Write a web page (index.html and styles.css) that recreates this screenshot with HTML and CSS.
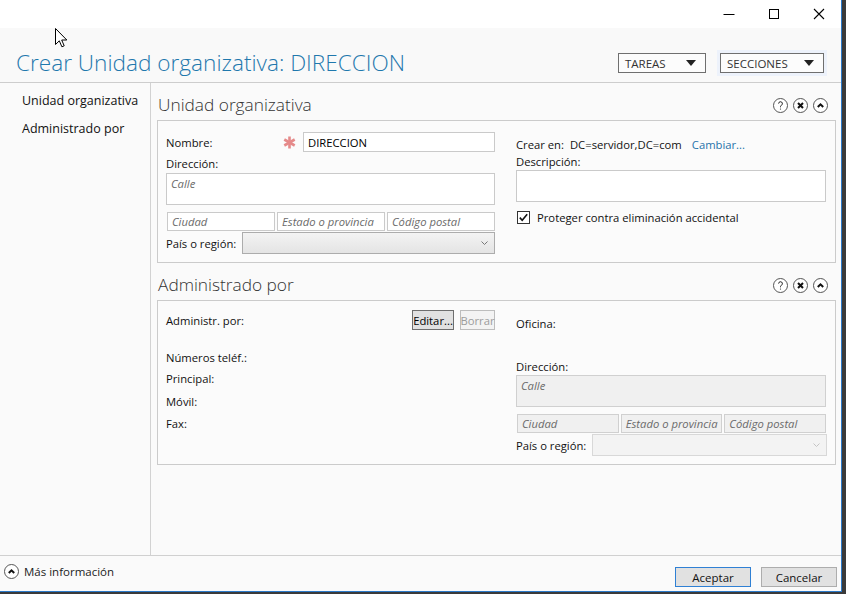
FILE: index.html
```html
<!DOCTYPE html>
<html lang="es">
<head>
<meta charset="utf-8">
<title>Crear Unidad organizativa: DIRECCION</title>
<link rel="stylesheet" href="styles.css">
</head>
<body>
<div class="window">
  <div class="titlebar">
    <span class="wbtn"><svg width="12" height="12" viewBox="0 0 12 12"><path d="M0.5 6.5h11" stroke="#000" stroke-width="1"/></svg></span>
    <span class="wbtn"><svg width="12" height="12" viewBox="0 0 12 12"><rect x="1.5" y="1.5" width="9" height="9" fill="none" stroke="#000" stroke-width="1"/></svg></span>
    <span class="wbtn"><svg width="12" height="12" viewBox="0 0 12 12"><path d="M1 1L11 11M11 1L1 11" stroke="#000" stroke-width="1.1"/></svg></span>
  </div>
  <div class="header">
    <h1 class="title">Crear Unidad organizativa: DIRECCION</h1>
    <div class="hbuttons">
      <div class="dd">TAREAS<span class="tri"></span></div>
      <div class="dd dd-wide focus">SECCIONES<span class="tri"></span></div>
    </div>
  </div>
  <div class="body">
    <nav class="nav">
      <div class="navitem">Unidad organizativa</div>
      <div class="navitem">Administrado por</div>
    </nav>
    <main class="main">
      <section class="section">
        <div class="shead">
          <h2 class="stitle">Unidad organizativa</h2>
          <div class="sicons">
            <span class="cicon"><svg width="15" height="15" viewBox="0 0 15 15"><circle cx="7.5" cy="7.5" r="7" fill="#fff" stroke="#555"/><path d="M5.6 5.6a1.9 1.9 0 1 1 2.6 1.8c-0.5 0.2-0.7 0.6-0.7 1.1v0.8" fill="none" stroke="#222" stroke-width="1"/><circle cx="7.5" cy="11" r="0.6" fill="#222"/></svg></span>
            <span class="cicon"><svg width="15" height="15" viewBox="0 0 15 15"><circle cx="7.5" cy="7.5" r="7" fill="#fff" stroke="#555"/><path d="M5 5L10 10M10 5L5 10" stroke="#111" stroke-width="2"/></svg></span>
            <span class="cicon"><svg width="15" height="15" viewBox="0 0 15 15"><circle cx="7.5" cy="7.5" r="7" fill="#fff" stroke="#555"/><path d="M4.8 9L7.5 6.3L10.2 9" fill="none" stroke="#111" stroke-width="2"/></svg></span>
          </div>
        </div>
        <div class="sbox sbox-1">
          <div class="col col-left">
            <div class="row row-name">
              <span class="lbl lbl-name">Nombre:</span>
              <span class="req"><svg width="13" height="13" viewBox="0 0 13 13"><g stroke="#e58a8a" stroke-width="2.6" stroke-linecap="butt"><path d="M6.5 0.5v12"/><path d="M1.3 3.5L11.7 9.5"/><path d="M1.3 9.5L11.7 3.5"/></g></svg></span>
              <div class="field field-name">DIRECCION</div>
            </div>
            <div class="lbl lbl-block mt4">Dirección:</div>
            <div class="field area mt1"><span class="ph">Calle</span></div>
            <div class="cityrow mt7">
              <div class="field city"><span class="ph">Ciudad</span></div>
              <div class="field city"><span class="ph">Estado o provincia</span></div>
              <div class="field city"><span class="ph">Código postal</span></div>
            </div>
            <div class="row row-country mt1">
              <span class="lbl lbl-country">País o región:</span>
              <div class="select"><svg width="7" height="4" viewBox="0 0 7 4"><path d="M0.5 0.5L3.5 3.5L6.5 0.5" fill="none" stroke="#777" stroke-width="1"/></svg></div>
            </div>
          </div>
          <div class="col col-right">
            <div class="lbl-block mt5 crear">
              <span class="lbl">Crear en:</span>
              <span class="dc">DC=servidor,DC=com</span>
              <span class="link">Cambiar...</span>
            </div>
            <div class="lbl lbl-block mt1">Descripción:</div>
            <div class="field area"></div>
            <div class="checkrow mt7">
              <span class="check"><svg width="13" height="13" viewBox="0 0 13 13"><rect x="0.5" y="0.5" width="12" height="12" fill="#fff" stroke="#333"/><path d="M2.8 6.6L5.2 9.2L10.2 3.2" fill="none" stroke="#111" stroke-width="1.6"/></svg></span>
              <span class="lbl">Proteger contra eliminación accidental</span>
            </div>
          </div>
        </div>
      </section>
      <section class="section">
        <div class="shead">
          <h2 class="stitle">Administrado por</h2>
          <div class="sicons">
            <span class="cicon"><svg width="15" height="15" viewBox="0 0 15 15"><circle cx="7.5" cy="7.5" r="7" fill="#fff" stroke="#555"/><path d="M5.6 5.6a1.9 1.9 0 1 1 2.6 1.8c-0.5 0.2-0.7 0.6-0.7 1.1v0.8" fill="none" stroke="#222" stroke-width="1"/><circle cx="7.5" cy="11" r="0.6" fill="#222"/></svg></span>
            <span class="cicon"><svg width="15" height="15" viewBox="0 0 15 15"><circle cx="7.5" cy="7.5" r="7" fill="#fff" stroke="#555"/><path d="M5 5L10 10M10 5L5 10" stroke="#111" stroke-width="2"/></svg></span>
            <span class="cicon"><svg width="15" height="15" viewBox="0 0 15 15"><circle cx="7.5" cy="7.5" r="7" fill="#fff" stroke="#555"/><path d="M4.8 9L7.5 6.3L10.2 9" fill="none" stroke="#111" stroke-width="2"/></svg></span>
          </div>
        </div>
        <div class="sbox sbox-2">
          <div class="col col-left">
            <div class="row row-admin">
              <span class="lbl">Administr. por:</span>
              <span class="btn btn-edit">Editar...</span>
              <span class="btn btn-del">Borrar</span>
            </div>
            <div class="lbl lbl-block mt20">Números teléf.:</div>
            <div class="lbl lbl-block mt5">Principal:</div>
            <div class="lbl lbl-block mt7">Móvil:</div>
            <div class="lbl lbl-block mt6">Fax:</div>
          </div>
          <div class="col col-right">
            <div class="lbl lbl-block mt6">Oficina:</div>
            <div class="lbl lbl-block mt27">Dirección:</div>
            <div class="field area disabled"><span class="ph">Calle</span></div>
            <div class="cityrow mt7">
              <div class="field city disabled"><span class="ph">Ciudad</span></div>
              <div class="field city disabled"><span class="ph">Estado o provincia</span></div>
              <div class="field city disabled"><span class="ph">Código postal</span></div>
            </div>
            <div class="row row-country mt1">
              <span class="lbl lbl-country2">País o región:</span>
              <div class="select select-disabled"><svg width="7" height="4" viewBox="0 0 7 4"><path d="M0.5 0.5L3.5 3.5L6.5 0.5" fill="none" stroke="#c4c4c4" stroke-width="1"/></svg></div>
            </div>
          </div>
        </div>
      </section>
    </main>
  </div>
  <div class="footer">
    <div class="more">
      <svg width="15" height="15" viewBox="0 0 15 15"><circle cx="7.5" cy="7.5" r="7" fill="#fff" stroke="#555"/><path d="M4.8 9L7.5 6.3L10.2 9" fill="none" stroke="#111" stroke-width="2"/></svg>
      <span>Más información</span>
    </div>
    <div class="actions">
      <span class="btn btn-foot btn-default">Aceptar</span>
      <span class="btn btn-foot">Cancelar</span>
    </div>
  </div>
</div>
<svg class="cursor" width="13" height="20" viewBox="0 0 13 20"><path d="M0.5 0.5L0.5 16.5L4.3 12.8L6.9 18.8L9.2 17.8L6.7 12L11.8 12Z" fill="#fff" stroke="#000" stroke-width="1" stroke-linejoin="miter"/></svg>
</body>
</html>
```
FILE: styles.css
```css
* { box-sizing: border-box; }
html, body { margin: 0; padding: 0; }
body {
  width: 846px;
  height: 594px;
  overflow: hidden;
  background: #3a3a3a;
  font-family: "Open Sans", "Noto Sans", sans-serif;
  font-size: 11.25px;
  color: #111;
  position: relative;
}
.window {
  width: 842px;
  height: 592px;
  background: #fafafa;
  border-right: 1px solid #2b79c9;
  border-bottom: 1px solid #2b79c9;
  display: flex;
  flex-direction: column;
}
.titlebar {
  height: 28px;
  background: #fff;
  display: flex;
  justify-content: flex-end;
  flex: 0 0 auto;
}
.wbtn {
  width: 45px;
  height: 28px;
  display: flex;
  align-items: center;
  justify-content: center;
}
.header {
  height: 55px;
  flex: 0 0 auto;
  background: #f9f9f9;
  border-bottom: 1px solid #cdcdcd;
  display: flex;
  justify-content: space-between;
  align-items: flex-start;
  padding: 0 17px 0 16px;
}
.title {
  margin: 20px 0 0 0;
  font-size: 22.6px;
  font-weight: 300;
  line-height: 30px;
  color: #1f78ad;
  white-space: nowrap;
}
.hbuttons {
  display: flex;
  gap: 14px;
  margin-top: 25px;
}
.dd {
  height: 20px;
  width: 88px;
  border: 1px solid #6f6f6f;
  background: #fcfcfc;
  display: flex;
  align-items: center;
  justify-content: space-between;
  padding: 0 9px 0 6px;
  font-size: 11.5px;
  color: #333;
}
.dd-wide { width: 104px; }
.focus { box-shadow: 0 0 0 3px #edf2fb; }
.tri {
  width: 0;
  height: 0;
  border-left: 5px solid transparent;
  border-right: 5px solid transparent;
  border-top: 6px solid #222;
}
.body {
  flex: 1 1 auto;
  display: flex;
  min-height: 0;
}
.nav {
  width: 151px;
  flex: 0 0 auto;
  border-right: 1px solid #d2d2d2;
  padding: 4px 0 0 22px;
}
.navitem {
  font-size: 12.5px;
  line-height: 28px;
  color: #111;
  white-space: nowrap;
}
.main {
  flex: 1 1 auto;
  padding: 0 5px 0 6px;
}
.shead {
  height: 37px;
  padding-top: 7px;
  display: flex;
  align-items: center;
  justify-content: space-between;
}
.stitle {
  margin: 0 0 0 1px;
  font-size: 17.3px;
  font-weight: 300;
  line-height: 22px;
  color: #333;
}
.sicons {
  display: flex;
  gap: 5px;
  margin-right: 8px;
}
.cicon { width: 15px; height: 15px; display: block; }
.cicon svg { display: block; }
.sbox {
  border: 1px solid #cbcbcb;
  background: #fbfbfb;
  display: flex;
  gap: 21px;
  padding: 11px 9px 8px 8px;
}
.sbox-2 { padding-top: 9px; }
.col { display: flex; flex-direction: column; }
.col-left { width: 329px; flex: 0 0 auto; }
.col-right { flex: 1 1 auto; }
.row { display: flex; align-items: center; }
.row-name { height: 20px; }
.lbl { color: #111; white-space: nowrap; }
.lbl-name { width: 117px; }
.req { width: 20px; display: flex; align-items: center; }
.req svg { display: block; }
.lbl-block { height: 16px; line-height: 16px; white-space: nowrap; }
.field {
  background: #fff;
  border: 1px solid #cacaca;
  height: 19px;
  padding: 0 4px;
  display: flex;
  align-items: center;
  white-space: nowrap;
  overflow: hidden;
}
.field-name { flex: 1 1 auto; height: 20px; color: #000; }
.area { height: 32px; align-items: flex-start; padding-top: 2px; }
.ph { font-style: italic; color: #6b6b6b; }
.cityrow { display: flex; gap: 2px; padding-left: 1px; }
.city { flex: 1 1 0; min-width: 0; height: 19px; }
.disabled { background: #f0f0f0; border-color: #d0d0d0; }
.row-country { height: 22px; }
.lbl-country { width: 76px; }
.lbl-country2 { width: 76px; }
.select {
  flex: 1 1 auto;
  height: 22px;
  border: 1px solid #acacac;
  background: linear-gradient(#f3f3f3, #e4e4e4);
  display: flex;
  align-items: center;
  justify-content: flex-end;
  padding-right: 6px;
}
.select svg { display: block; }
.select-disabled { background: #f3f3f3; border-color: #d8d8d8; margin-right: -1px; }
.crear { display: flex; align-items: center; }
.dc { margin-left: 6px; color: #111; }
.link { margin-left: 10px; color: #1f72aa; }
.checkrow { display: flex; align-items: center; height: 16px; gap: 7px; padding-left: 1px; }
.check { display: block; width: 13px; height: 13px; }
.check svg { display: block; }
.row-admin { height: 20px; }
.btn {
  height: 20px;
  display: flex;
  align-items: center;
  justify-content: center;
  border: 1px solid #6e6e6e;
  background: #e1e1e1;
  color: #000;
  white-space: nowrap;
}
.btn-edit { margin-left: auto; width: 42px; }
.btn-del { margin-left: 6px; width: 35px; border-color: #bdbdbd; background: #f3f3f3; color: #9c9c9c; }
.mt1 { margin-top: 1px; }
.mt4 { margin-top: 4px; }
.mt5 { margin-top: 5px; }
.mt6 { margin-top: 6px; }
.mt7 { margin-top: 7px; }
.mt20 { margin-top: 20px; }
.mt27 { margin-top: 27px; }
.footer {
  height: 36px;
  flex: 0 0 auto;
  border-top: 1px solid #d0d0d0;
  background: #fafafa;
  display: flex;
  justify-content: space-between;
  align-items: flex-start;
  padding: 0 4px 0 4px;
}
.more {
  margin-top: 7px;
  display: flex;
  align-items: center;
  gap: 5px;
  height: 16px;
  font-size: 11.5px;
  color: #222;
}
.more svg { display: block; }
.actions {
  display: flex;
  gap: 10px;
  margin-top: 11px;
}
.btn-foot {
  width: 76px;
  border-color: #adadad;
  font-size: 11.5px;
  color: #111;
}
.btn-default { border-color: #2f80d4; }
.cursor {
  position: absolute;
  left: 55px;
  top: 28px;
}
```
